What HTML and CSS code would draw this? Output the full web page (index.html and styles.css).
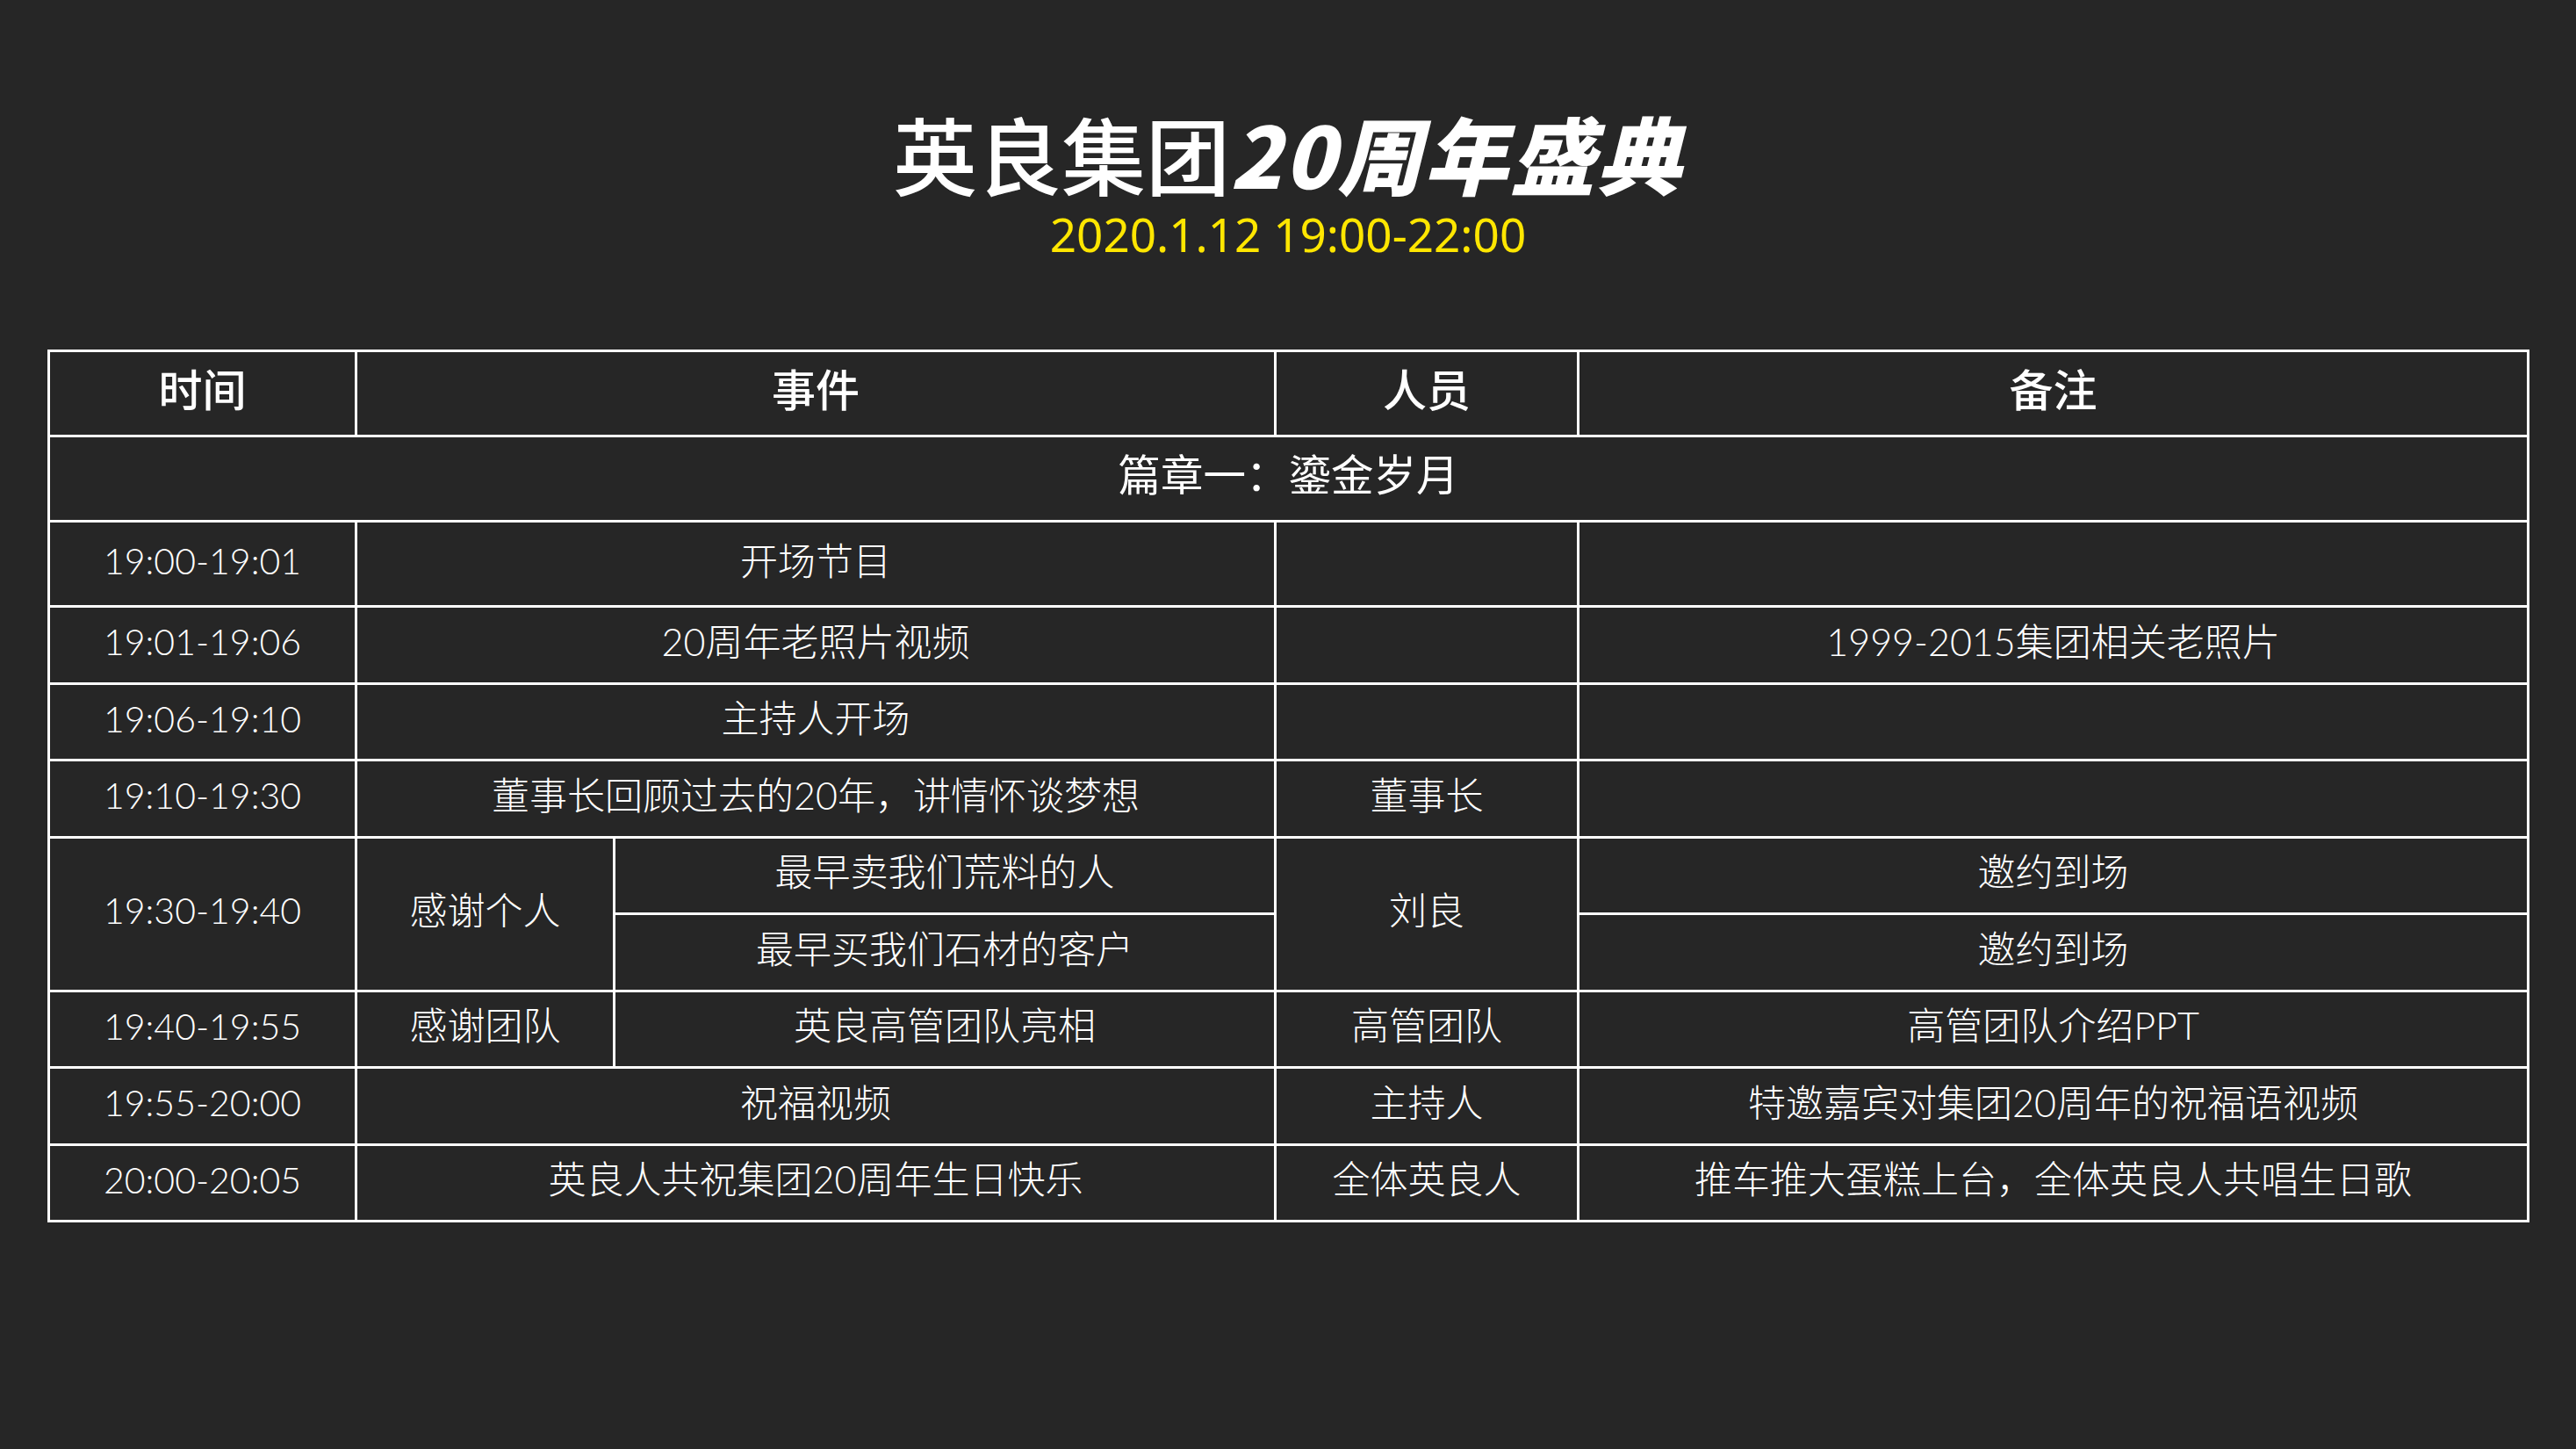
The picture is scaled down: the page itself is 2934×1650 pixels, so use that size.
FILE: index.html
```html
<!DOCTYPE html>
<html lang="zh-CN">
<head>
<meta charset="utf-8">
<title>英良集团20周年盛典</title>
<link rel="stylesheet" href="styles.css">
</head>
<body>
<div class="page">
  <header class="hero">
    <h1 class="title"><span class="title-plain">英良集团</span><span class="title-bold">20周年盛典</span></h1>
    <div class="subtitle">2020.1.12 19:00-22:00</div>
  </header>
  <table class="schedule">
    <colgroup>
      <col class="c-time"><col class="c-ev1"><col class="c-ev2"><col class="c-person"><col class="c-note">
    </colgroup>
    <thead>
      <tr class="row-head"><th>时间</th><th colspan="2">事件</th><th>人员</th><th>备注</th></tr>
    </thead>
    <tbody>
      <tr class="row-section"><td colspan="5" class="section">篇章一：鎏金岁月</td></tr>
      <tr class="row-first"><td class="time">19:00-19:01</td><td colspan="2">开场节目</td><td></td><td></td></tr>
      <tr><td class="time">19:01-19:06</td><td colspan="2">20周年老照片视频</td><td></td><td>1999-2015集团相关老照片</td></tr>
      <tr><td class="time">19:06-19:10</td><td colspan="2">主持人开场</td><td></td><td></td></tr>
      <tr><td class="time">19:10-19:30</td><td colspan="2">董事长回顾过去的20年，讲情怀谈梦想</td><td>董事长</td><td></td></tr>
      <tr><td class="time" rowspan="2">19:30-19:40</td><td rowspan="2">感谢个人</td><td>最早卖我们荒料的人</td><td rowspan="2">刘良</td><td>邀约到场</td></tr>
      <tr><td>最早买我们石材的客户</td><td>邀约到场</td></tr>
      <tr><td class="time">19:40-19:55</td><td>感谢团队</td><td>英良高管团队亮相</td><td>高管团队</td><td>高管团队介绍PPT</td></tr>
      <tr><td class="time">19:55-20:00</td><td colspan="2">祝福视频</td><td>主持人</td><td>特邀嘉宾对集团20周年的祝福语视频</td></tr>
      <tr><td class="time">20:00-20:05</td><td colspan="2">英良人共祝集团20周年生日快乐</td><td>全体英良人</td><td>推车推大蛋糕上台，全体英良人共唱生日歌</td></tr>
    </tbody>
  </table>
</div>
</body>
</html>
```
FILE: styles.css
```css
html, body {
  margin: 0;
  padding: 0;
  background: #262626;
}
.page {
  width: 2934px;
  height: 1650px;
  background: #262626;
  color: #ffffff;
  font-family: "Noto Sans CJK SC", "Noto Sans", sans-serif;
  overflow: hidden;
}
.hero {
  padding-top: 124px;
  text-align: center;
}
.title {
  margin: 0;
  font-size: 96px;
  line-height: 100px;
  font-weight: 500;
  color: #ffffff;
}
.title-bold {
  font-weight: 900;
  font-style: italic;
  letter-spacing: 2.5px;
}
.subtitle {
  margin-top: 11px;
  font-family: "Noto Sans", "Noto Sans CJK SC", sans-serif;
  font-size: 53px;
  line-height: 64px;
  color: #ffe600;
}
.schedule {
  margin: 99px 0 0 54px;
  width: 2824px;
  table-layout: fixed;
  border-collapse: collapse;
  font-family: "Lato", "Noto Sans CJK SC", sans-serif;
  font-weight: 300;
  font-size: 43px;
  color: #ffffff;
}
.c-time { width: 350px; }
.c-ev1 { width: 294px; }
.c-ev2 { width: 753px; }
.c-person { width: 345px; }
.c-note { width: 1082px; }
.schedule th,
.schedule td {
  border: 3px solid #ffffff;
  padding: 0 0 7px 0;
  text-align: center;
  vertical-align: middle;
  line-height: 1.2;
  white-space: nowrap;
}
.schedule th {
  font-family: "Noto Sans CJK SC", sans-serif;
  font-size: 50px;
  font-weight: 500;
  padding-bottom: 14px;
}
.schedule tr { height: 87.5px; }
.schedule tr.row-head { height: 96.5px; }
.schedule tr.row-section { height: 97.5px; }
.schedule tr.row-first { height: 97px; }
.schedule td.section {
  font-family: "Noto Sans CJK SC", sans-serif;
  font-size: 48.5px;
  font-weight: 400;
  padding-bottom: 14px;
}
.time {
  font-size: 41px;
}
```
